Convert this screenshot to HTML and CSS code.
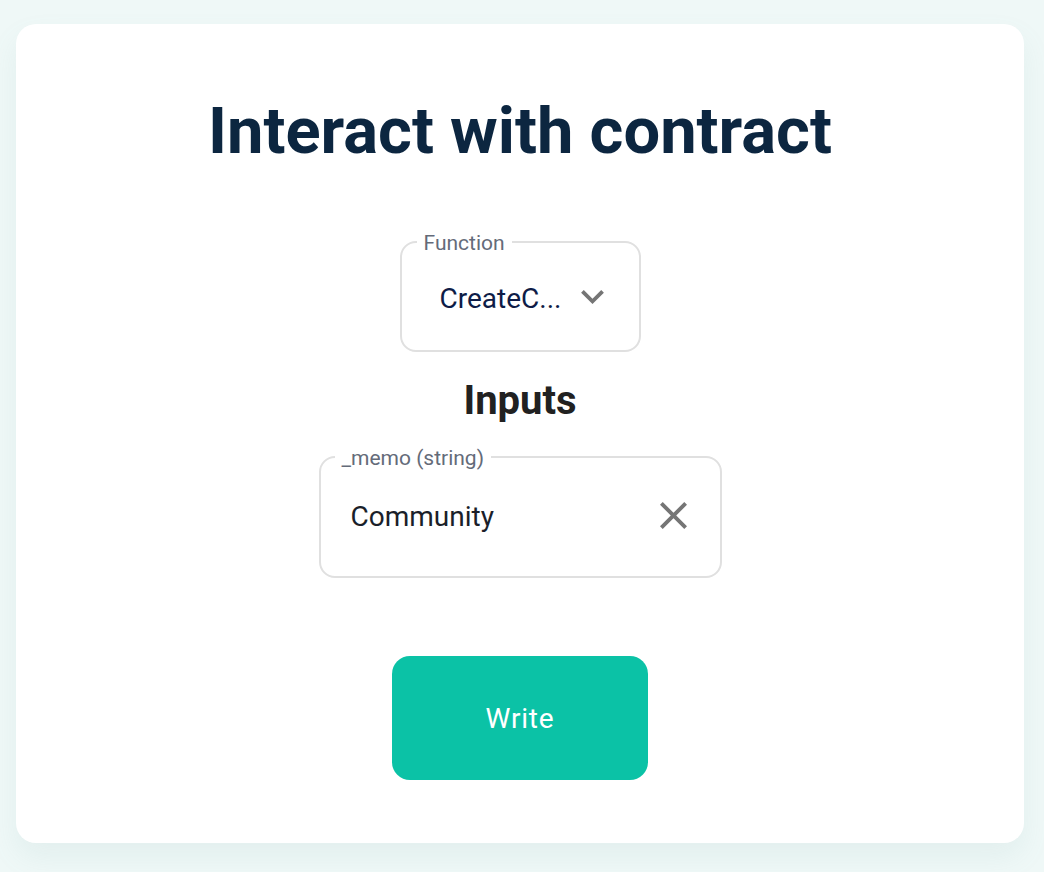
FILE: index.html
```html
<!DOCTYPE html>
<html lang="en">
<head>
<meta charset="utf-8">
<title>Interact with contract</title>
<link rel="stylesheet" href="styles.css">
</head>
<body>
<main class="card">
  <h1 class="title">Interact with contract</h1>
  <div class="field field-select">
    <span class="field-label">Function</span>
    <span class="field-value value-navy">CreateC...</span>
    <svg class="icon icon-chevron" viewBox="5 7 14 10" aria-hidden="true"><path d="M16.59 8.59 12 13.17 7.41 8.59 6 10l6 6 6-6z"/></svg>
  </div>
  <h2 class="subtitle">Inputs</h2>
  <div class="field field-input">
    <span class="field-label">_memo (string)</span>
    <span class="field-value value-dark">Community</span>
    <svg class="icon icon-close" viewBox="5 5 14 14" aria-hidden="true"><path d="M19 6.41 17.59 5 12 10.59 6.41 5 5 6.41 10.59 12 5 17.59 6.41 19 12 13.41 17.59 19 19 17.59 13.41 12z"/></svg>
  </div>
  <button class="btn-write" type="button">Write</button>
</main>
</body>
</html>
```
FILE: styles.css
```css
html, body {
  margin: 0;
  padding: 0;
}
body {
  background: #eff8f7;
  font-family: Roboto, "Liberation Sans", sans-serif;
  padding: 24px 20px 29px 16px;
  min-height: 872px;
  box-sizing: border-box;
}
.card {
  background: #ffffff;
  border-radius: 20px;
  height: 819px;
  box-sizing: border-box;
  box-shadow: 0 14px 28px rgba(120, 170, 170, 0.10);
  display: flex;
  flex-direction: column;
  align-items: center;
  padding-top: 70px;
}
.title {
  margin: 0;
  font-size: 65px;
  line-height: 74px;
  font-weight: 700;
  color: #0c2640;
}
.field {
  position: relative;
  border: 2px solid #e0e0e0;
  border-radius: 16px;
  box-sizing: border-box;
  display: flex;
  align-items: center;
}
.field-label {
  position: absolute;
  top: -12px;
  background: #fff;
  padding: 0 7px;
  font-size: 21px;
  line-height: 24px;
  color: #646b79;
}
.field-value {
  font-size: 28px;
  line-height: 32px;
}
.value-navy { color: #0e1c47; }
.value-dark { color: #1b1f2a; }
.icon { fill: #757575; display: block; }
.field-select {
  margin-top: 73px;
  width: 241px;
  height: 111px;
  padding: 4px 33px 0 38px;
  justify-content: space-between;
}
.field-select .field-label { left: 15px; }
.icon-chevron { width: 27px; height: 19px; margin-top: -4px; }
.subtitle {
  margin: 26px 0 0;
  font-size: 40px;
  line-height: 46px;
  font-weight: 700;
  color: #212121;
}
.field-input {
  margin-top: 32px;
  width: 403px;
  height: 122px;
  padding: 0 33px 0 30px;
  justify-content: space-between;
}
.field-input .field-label { left: 14px; }
.icon-close { width: 27px; height: 27px; margin-top: -4px; }
.btn-write {
  margin-top: 78px;
  width: 256px;
  height: 124px;
  border: none;
  border-radius: 18px;
  background: #0bc2a6;
  color: #ffffff;
  font-family: Roboto, "Liberation Sans", sans-serif;
  font-size: 28px;
  letter-spacing: 0.8px;
  font-weight: 400;
}
```
